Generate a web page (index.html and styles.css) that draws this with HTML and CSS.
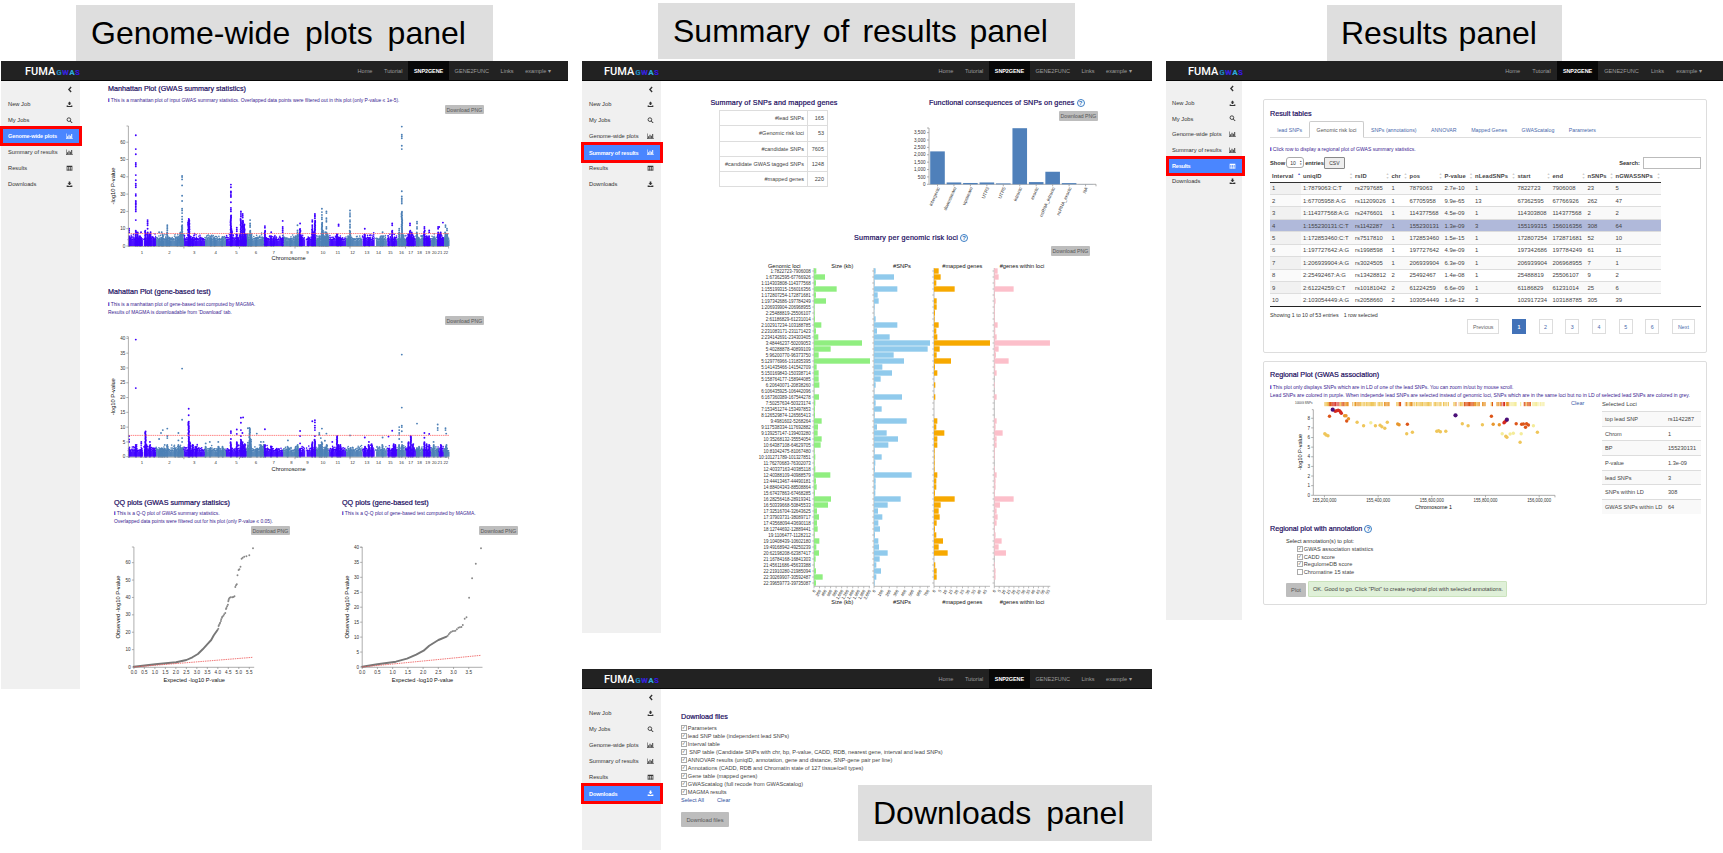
FILE: index.html
```html
<!DOCTYPE html>
<html lang="en">
<head>
<meta charset="utf-8">
<title>FUMA GWAS panels</title>
<link rel="stylesheet" href="styles.css">
</head>
<body>
<svg class="defs" width="0" height="0">
  <symbol id="i-upload" viewBox="0 0 16 16"><path d="M8 1l4.500 5H10v4H6V6H3.500zM1 11h3.500v1.500h7V11H15v4H1z"/></symbol>
  <symbol id="i-download" viewBox="0 0 16 16"><path d="M6 1h4v4.500h3L8 10.500 3 5.500h3zM1 11h3.500l3.500 2 3.500-2H15v4H1z"/></symbol>
  <symbol id="i-search" viewBox="0 0 16 16"><circle cx="6.500" cy="6.500" r="4.500" fill="none" stroke="currentColor" stroke-width="2.200"/><path d="M9 10.500L10.500 9l5 5-1.500 1.500z"/></symbol>
  <symbol id="i-chart" viewBox="0 0 18 16"><path d="M0 1h1.300v13H18v1.300H0zM3 8h2.400v5H3zM6.500 4h2.400v9H6.500zM10 6.500h2.400V13H10zM13.500 2.500h2.400V13h-2.400z"/></symbol>
  <symbol id="i-table" viewBox="0 0 16 16"><path fill-rule="evenodd" d="M1 2h14v12H1zM2.300 5v2h3V5zm4.300 0v2h3V5zM11 5v2h2.700V5zM2.300 8v2h3V8zm4.300 0v2h3V8zM11 8v2h2.700V8zM2.300 11v2h3v-2zm4.300 0v2h3v-2zm4.400 0v2h2.700v-2z"/></symbol>
  <symbol id="i-left" viewBox="0 0 16 16"><path d="M11 1.500L5 8l6 6.500" fill="none" stroke="currentColor" stroke-width="3.600"/></symbol>
</svg>

<div class="board">
  <div class="col col-a">
    <h1 class="title title-a">Genome-wide plots panel</h1>
    <section class="panel panel-a" data-active="2">
      <main class="plots">
        <div class="block manhattan">
          <h2>Manhattan Plot (GWAS summary statistics)</h2>
          <p class="info"><b>i</b> This is a manhattan plot of input GWAS summary statistics. Overlapped data points were filtered out in this plot (only P-value ≤ 1e-5).</p>
          <button class="png">Download PNG</button>
          <svg id="man1" width="390" height="150" viewBox="100 118 390 150"></svg>
        </div>
        <div class="block manhattan gene">
          <h2>Mahattan Plot (gene-based test)</h2>
          <p class="info"><b>i</b> This is a manhattan plot of gene-based test computed by MAGMA.</p>
          <p class="info">Results of MAGMA is downloadable from 'Download' tab.</p>
          <button class="png">Download PNG</button>
          <svg id="man2" width="390" height="146" viewBox="100 329 390 146"></svg>
        </div>
        <div class="qq-row">
          <div class="block qq">
            <h2>QQ plots (GWAS summary statisics)</h2>
            <p class="info"><b>i</b> This is a Q-Q plot of GWAS summary statistics.</p>
            <p class="info">Overlapped data points were filtered out for his plot (only P-value ≤ 0.05).</p>
            <button class="png">Download PNG</button>
            <svg id="qq1" width="160" height="148" viewBox="114 538 160 148"></svg>
          </div>
          <div class="block qq">
            <h2>QQ plots (gene-based test)</h2>
            <p class="info"><b>i</b> This is a Q-Q plot of gene-based test computed by MAGMA.</p>
            <p class="info">&nbsp;</p>
            <button class="png">Download PNG</button>
            <svg id="qq2" width="160" height="148" viewBox="342 538 160 148"></svg>
          </div>
        </div>
      </main>
    </section>
  </div>

  <div class="col col-b">
    <h1 class="title title-b">Summary of results panel</h1>
    <section class="panel panel-b" data-active="3">
      <main class="summary">
        <div class="sum-top">
          <div class="sum-left">
            <h2>Summary of SNPs and mapped genes</h2>
            <table class="counts">
              <tr><td>#lead SNPs</td><td>165</td></tr>
              <tr><td>#Genomic risk loci</td><td>53</td></tr>
              <tr><td>#candidate SNPs</td><td>7605</td></tr>
              <tr><td>#candidate GWAS tagged SNPs</td><td>1248</td></tr>
              <tr><td>#mapped genes</td><td>220</td></tr>
            </table>
          </div>
          <div class="sum-right">
            <h2>Functional consequences of SNPs on genes <i class="help">?</i></h2>
            <button class="png">Download PNG</button>
            <svg id="bars" width="200" height="100" viewBox="905 121 200 100"></svg>
          </div>
        </div>
        <h2 class="loci-title">Summary per genomic risk loci <i class="help">?</i></h2>
        <button class="png loci-png">Download PNG</button>
        <svg id="loci" width="330" height="350" viewBox="750 258 330 350"></svg>
      </main>
    </section>

    <section class="panel panel-d" data-active="5">
      <main class="downloads">
        <h2>Download files</h2>
        <ul class="checks">
          <li class="on">Parameters</li>
          <li class="on">lead SNP table (independent lead SNPs)</li>
          <li class="on">Interval table</li>
          <li class="on">&nbsp;SNP table (Candidate SNPs with chr, bp, P-value, CADD, RDB, nearest gene, interval and lead SNPs)</li>
          <li class="on">ANNOVAR results (uniqID, annotation, gene and distance, SNP-gene pair per line)</li>
          <li class="on">Annotations (CADD, RDB and Chromatin state of 127 tissue/cell types)</li>
          <li class="on">Gene table (mapped genes)</li>
          <li class="on">GWAScatalog (full recode from GWAScatalog)</li>
          <li class="on">MAGMA results</li>
        </ul>
        <p class="links"><a>Select All</a><a>Clear</a></p>
        <button class="big">Download files</button>
      </main>
      <h1 class="title title-d">Downloads panel</h1>
    </section>
  </div>

  <div class="col col-c">
    <h1 class="title title-c">Results panel</h1>
    <section class="panel panel-c" data-active="4">
      <main class="results">
        <div class="card card-tables">
          <h2>Result tables</h2>
          <nav class="tabs"><a>lead SNPs</a><a class="on">Genomic risk loci</a><a>SNPs (annotations)</a><a>ANNOVAR</a><a>Mapped Genes</a><a>GWAScatalog</a><a>Parameters</a></nav>
          <p class="info"><b>i</b> Click row to display a regional plot of GWAS summary statistics.</p>
          <div class="tools"><span>Show</span><span class="select">10 <small>▴<br>▾</small></span><span>entries</span><button class="csv">CSV</button><span class="search">Search:</span><span class="input"></span></div>
          <table class="grid" id="grid"></table>
          <p class="showing">Showing 1 to 10 of 53 entries<span>1 row selected</span></p>
          <div class="pages"><a class="prev">Previous</a><a class="on">1</a><a>2</a><a>3</a><a>4</a><a>5</a><a>6</a><a class="next">Next</a></div>
        </div>
        <div class="card card-plot">
          <h2>Regional Plot (GWAS association)</h2>
          <p class="info"><b>i</b> This plot only displays SNPs which are in LD of one of the lead SNPs. You can zoom in/out by mouse scroll.</p>
          <p class="info wide">Lead SNPs are colored in purple. When independe lead SNPs are selected instead of genomic loci, SNPs which are in the same loci but no in LD of selected lead SNPs are colored in grey.</p>
          <div class="regional">
            <svg id="region" width="301" height="114" viewBox="1270 399 301 114"></svg>
            <a class="clear">Clear</a>
            <div class="selected">
              <p>Selected Loci</p>
              <table>
                <tr><td>top lead SNP</td><td>rs1142287</td></tr>
                <tr><td>Chrom</td><td>1</td></tr>
                <tr><td>BP</td><td>155230131</td></tr>
                <tr><td>P-value</td><td>1.3e-09</td></tr>
                <tr><td>lead SNPs</td><td>3</td></tr>
                <tr><td>SNPs within LD</td><td>308</td></tr>
                <tr><td>GWAS SNPs within LD</td><td>64</td></tr>
              </table>
            </div>
          </div>
          <h2 class="anno">Regional plot with annotation <i class="help">?</i></h2>
          <p class="pick">Select annotation(s) to plot:</p>
          <ul class="checks">
            <li class="on">GWAS association statistics</li>
            <li class="on">CADD score</li>
            <li class="on">RegulomeDB score</li>
            <li>Chromatine 15 state</li>
          </ul>
          <div class="go"><button class="big">Plot</button><span class="alert">OK. Good to go. Click "Plot" to create regional plot with selected annotations.</span></div>
        </div>
      </main>
    </section>
  </div>
</div>
<script src="app.js"></script>
</body>
</html>
```
FILE: styles.css
```css
* { box-sizing: border-box; }
body { margin: 0; width: 1723px; height: 853px; overflow: hidden; background: #fff; color: #333; font: 5.6px "Liberation Sans", Arial, sans-serif; }
h1, h2, p, ul { margin: 0; padding: 0; font-weight: normal; }
svg { display: block; }
.defs { position: absolute; }
button { font-family: inherit; border: 0; padding: 0; display: block; color: #555; background: #bdbdbd; border-radius: 1px; white-space: nowrap; }
.board { display: flex; height: 853px; }
.col-a { width: 581px; padding: 5px 0 0 1px; }
.col-b { width: 585px; padding: 3px 0 0 1px; }
.col-c { width: 557px; padding-top: 5px; }

.title { height: 56px; line-height: 56px; font-size: 32px; color: #000; background: #dedede; white-space: nowrap; }
.title-a { width: 417px; margin-left: 75px; padding-left: 15px; word-spacing: 6px; }
.title-b { width: 417px; margin: 0 0 2px 76px; padding-left: 15px; word-spacing: 4px; }
.title-c { width: 235px; margin-left: 161px; padding-left: 14px; word-spacing: 2px; }
.title-d { position: absolute; left: 276px; top: 116px; width: 294px; padding-left: 15px; word-spacing: 6px; }

.panel { position: relative; display: grid; grid-template: 20px 1fr / 79px 1fr; }
.panel-a { width: 567px; height: 628px; }
.panel-b { width: 570px; height: 572px; }
.panel-d { width: 570px; height: 181px; margin-top: 36px; }
.panel-c { width: 557px; height: 559px; grid-template-columns: 76px 1fr; }
.topbar { grid-column: 1 / 3; display: flex; align-items: center; background: #222; border-bottom: 1px solid #080808; padding: 0 11.4px 0 24px; color: #9d9d9d; font-size: 5.6px; }
.panel-b .topbar, .panel-d .topbar { padding-right: 14.5px; padding-left: 22px; }
.panel-c .topbar { padding-right: 15px; padding-left: 22px; }
.logo { color: #fff; font: 500 11px/19px Roboto, sans-serif; margin-right: auto; display: flex; align-items: baseline; padding-top: 3px; }
.logo small { font-size: 8px; letter-spacing: .3px; font-weight: 900; margin-left: 1px; }
.logo .g { color: #1f86b8; } .logo .w { color: #3522d6; } .logo .a { color: #2ea9dc; } .logo .s { color: #3516dc; }
.topbar a { line-height: 20px; height: 19px; padding: 0 5.75px; }
.topbar a.on { color: #fff; background: #080808; font-weight: bold; font-size: 5.5px; letter-spacing: -.1px; }
.panel-c .topbar a { padding: 0 6.1px; }
.side { background: #f0f0f0; color: #333; padding-top: 2px; }
.side .fold { display: flex; justify-content: flex-end; height: 13px; padding: 2px 7px 0 0; }
.side .fold svg { width: 6px; height: 7px; }
.side a { display: flex; align-items: center; justify-content: space-between; height: 14px; margin-bottom: 2px; padding: 0 7px; font-size: 5.75px; }
.side a svg { width: 7px; height: 6.5px; fill: currentColor; }
.side a.on { height: 20px; margin: -3px -2px -1px -1px; padding: 0 6px 0 5px; border: 3px solid #f00; background: #4a86ff; color: #fff; font-weight: bold; font-size: 5.6px; letter-spacing: -.15px; position: relative; }
.panel-a .side, .panel-b .side { padding-top: 3px; }
.panel-d .side { padding-top: 3px; }
.panel-d .side .fold { height: 14px; }
.panel-b .side a.on, .panel-d .side a.on { height: 21px; margin-bottom: -2px; }
.panel-c .side a { margin-bottom: 1.7px; padding: 0 6px; }
.panel-c .side a.on { margin: -3px -3px -1.3px 0; padding: 0 6px 0 3px; letter-spacing: -.25px; }

h2 { font-size: 7.2px; line-height: 10px; color: #190a5c; -webkit-text-stroke: .2px #190a5c; white-space: nowrap; }
.info { color: #3a2391; font-size: 5.05px; line-height: 8px; height: 8px; white-space: nowrap; }
.info b { color: #1d00b8; -webkit-text-stroke: .2px #1d00b8; }
.plots .info { font-size: 4.92px; }
.png { width: 39px; height: 9.5px; font-size: 5.2px; line-height: 10px; }
.help { display: inline-block; width: 8px; height: 8px; border: 1px solid #3b7dc4; border-radius: 50%; color: #2a6bb5; font: bold 6px/6.5px "Liberation Sans", sans-serif; text-align: center; vertical-align: middle; -webkit-text-stroke: 0; }

/* genome-wide plots */
.plots { padding: 3px 0 0 20px; }
.manhattan { height: 203px; }
.manhattan h2, .manhattan .info { margin-left: 8px; }
.manhattan h2 { margin-bottom: 3px; }
.manhattan .png { margin: -.5px 0 4px 345px; }
.gene .png { margin: -1px 0 4px 345px; }
.gene .info { line-height: 9px; height: 8.3px; }
.qq-row { display: flex; padding: 7.5px 0 0 14px; gap: 68px; }
.qq { width: 160px; }
.qq h2 { margin-bottom: 2.5px; }
.qq .png { margin: -.5px 0 2.5px 137px; }

/* summary */
.summary { padding: 17px 0 0 0; }
.sum-top { display: flex; height: 135px; }
.sum-left { width: 244px; padding-left: 58px; }
.sum-left h2 { width: 110px; display: flex; justify-content: center; margin-bottom: 2px; letter-spacing: .14px; }
.counts { border-collapse: collapse; font-size: 5.5px; width: 109px; color: #444; }
.counts td { border: 1px solid #ddd; height: 15.3px; padding: 0 3px; text-align: right; white-space: nowrap; }
.counts td:last-child { width: 20px; }
.sum-right h2 { margin: 0 0 3px 24px; letter-spacing: .1px; }
.sum-right .png { margin-left: 154px; }
.loci-title { margin-left: 193px; height: 12px; letter-spacing: .2px; }
.loci-png { margin: 1px 0 2.5px 390px; }
#loci { margin-left: 89px; }

/* downloads */
.downloads { padding: 23px 0 0 20px; color: #444; }
.downloads h2 { margin-bottom: 2px; }
.checks { list-style: none; color: #444; }
.checks li { display: flex; align-items: center; gap: .8px; height: 8.05px; font-size: 5.6px; white-space: nowrap; }
.checks li::before { content: ""; width: 4px; height: 4px; border: .5px solid #aaa; font: bold 4.5px/3.5px "DejaVu Sans", sans-serif; color: #111; display: block; }
.checks li.on::before { content: "✓"; }
.links { color: #2f4fa0; height: 8px; line-height: 9px; display: flex; gap: 13px; }
.big { height: 15px; width: 48px; font-size: 5.7px; }
.downloads .big { margin-top: 8px; }

/* results */
.results { padding: 18px 16px 0 21px; }
.card { border: 1px solid #ddd; border-radius: 2px; padding-left: 6px; padding-right: 5px; }
.card-tables { height: 254px; padding-top: 9px; margin-bottom: 8px; }
.card-plot { height: 243.5px; padding-top: 8px; }
.tabs { display: flex; height: 17px; margin-top: 2px; border-bottom: 1px solid #ddd; color: #4767ab; font-size: 5.25px; line-height: 18px; }
.tabs a { padding: 0 6.25px; border: 1px solid transparent; height: 17px; line-height: 16px; white-space: nowrap; }
.tabs a.on { border-color: #ccc; border-bottom-color: #fff; border-radius: 2px 2px 0 0; background: #fff; color: #555; }
.card-tables .info { margin-top: 7px; }
.tools { display: flex; align-items: center; height: 13px; margin-top: 3px; font-size: 5.7px; font-weight: bold; }
.select { display: flex; align-items: center; justify-content: space-between; width: 18px; height: 11px; border: 1px solid #aaa; border-radius: 3px; margin: 0 1px; padding: 0 1.5px 0 3px; font-weight: normal; font-size: 5px; }
.select small { font-size: 3px; line-height: 3px; }
.csv { width: 21px; height: 12px; background: #eee; border: 1px solid #888; font-size: 5px; color: #333; }
.search { margin-left: auto; margin-right: 3px; }
.input { width: 58px; height: 12px; border: 1px solid #bbb; }
.grid { border-collapse: collapse; table-layout: fixed; width: 390.5px; font-size: 5.9px; color: #444; margin-top: 1px; }
.grid th { height: 12px; text-align: left; padding: 0 0 0 2px; white-space: nowrap; border-bottom: 1px solid #333; font-size: 5.8px; letter-spacing: .1px; position: relative; }
.grid th i { position: absolute; right: 1px; top: 2px; font: 4px/4px "DejaVu Sans"; color: #ccc; }
.grid th:first-child i { color: #45c; }
.grid td { height: 12.44px; padding: 0 0 0 2px; white-space: nowrap; border-top: 1px solid #ddd; }
.grid tr:nth-child(even) td { background: #f9f9f9; }
.grid tr td:first-child { background: #fafafa; }
.grid tr:nth-child(even) td:first-child { background: #f1f1f1; }
.grid tr.sel td, .grid tr.sel td:first-child { background: #b0b9da; }
.showing { border-top: 1px solid #222; line-height: 16px; height: 13px; font-size: 5.3px; }
.showing span { margin-left: 5px; }
.pages { display: flex; justify-content: flex-end; gap: 12.7px; padding-right: 6px; color: #4767ab; font-size: 5.3px; }
.pages a { width: 14px; height: 15px; line-height: 14px; border: 1px solid #ddd; text-align: center; }
.pages .prev { width: 32px; color: #666; } .pages .next { width: 23px; }
.pages a.on { background: #4272b8; border-color: #4272b8; color: #fff; font-weight: bold; }
.card-plot h2 { margin-bottom: 3px; }
.regional { display: flex; height: 125px; }
.clear { width: 31px; color: #3c5aa8; line-height: 8px; }
.selected { width: 99px; color: #444; }
.selected p { line-height: 11px; height: 12px; font-size: 5.8px; }
.selected table { border-collapse: collapse; width: 99px; font-size: 5.6px; }
.selected td { height: 14.7px; padding: 0 3px; border-top: 1px solid #ddd; white-space: nowrap; }
.selected td:last-child { padding-left: 0; width: 33px; }
.selected tr:nth-child(odd) { background: #f9f9f9; }
.card-plot h2.anno { margin-bottom: 2px; }
.pick { margin-left: 16px; line-height: 10px; height: 9px; }
.card-plot .checks { margin-left: 27px; }
.card-plot .checks li { height: 7.8px; }
.go { display: flex; align-items: flex-end; gap: 2px; margin: 5px 0 0 16px; }
.go .big { width: 20px; height: 14px; }
.alert { width: 199px; height: 16px; line-height: 15px; padding-left: 4px; background: #dff0d8; border: 1px solid #cbe3bd; border-radius: 1px; font-size: 5.58px; color: #444; white-space: nowrap; }
svg text { font-family: "Liberation Sans", Arial, sans-serif; }
```
FILE: app.js
```js
const MENU = [['New Job', 'upload'], ['My Jobs', 'search'], ['Genome-wide plots', 'chart'], ['Summary of results', 'chart'], ['Results', 'table'], ['Downloads', 'download']];

document.querySelectorAll('.panel').forEach(panel => {
  const active = +panel.dataset.active;
  const items = MENU.map(([name, icon], i) =>
    `<a class="${i === active ? 'on' : ''}"><span>${name}</span><svg><use href="#i-${icon}"/></svg></a>`).join('');
  panel.insertAdjacentHTML('afterbegin',
    `<header class="topbar"><div class="logo">FUMA<small><span class="g">G</span><span class="w">W</span><span class="a">A</span><span class="s">S</span></small></div>
     <a>Home</a><a>Tutorial</a><a class="on">SNP2GENE</a><a>GENE2FUNC</a><a>Links</a><a>example ▾</a></header>
     <aside class="side"><div class="fold"><svg><use href="#i-left"/></svg></div>${items}</aside>`);
});

const $ = id => document.getElementById(id);
let seed = 7;
const rnd = () => (seed = (seed * 16807) % 2147483647) / 2147483647;

const text = (x, y, s, o = {}) => {
  const size = o.size || 4.6;
  const len = o.len ? ` textLength="${o.len}" lengthAdjust="spacingAndGlyphs"` : '';
  const rot = o.rot ? ` transform="rotate(${o.rot} ${x} ${y})"` : '';
  return `<text x="${x}" y="${y}" dy="${size * 0.36}" font-size="${size}" text-anchor="${o.anchor || 'middle'}" fill="${o.fill || '#333'}"${len}${rot}>${s}</text>`;
};
const line = (x1, y1, x2, y2, c = '#999', extra = '') =>
  `<line x1="${x1}" y1="${y1}" x2="${x2}" y2="${y2}" stroke="${c}" stroke-width=".8" ${extra}/>`;
const dot = (x, y, c, r = 0.95) => `<circle cx="${x.toFixed(1)}" cy="${y.toFixed(1)}" r="${r}" fill="${c}"/>`;

/* Manhattan plots */
const BOUNDS = [347, 421, 497, 553, 611, 666, 716, 765, 808, 852, 890, 934, 978, 1012, 1045, 1072, 1097, 1123, 1145, 1164, 1184, 1199, 1213];
const LABELS = [142, 169.4, 194.2, 215.7, 236.4, 256, 273.8, 291.5, 307.4, 323, 337.8, 352.6, 367, 378.5, 390.3, 401.4, 410.7, 419.5, 427.7, 434.3, 439.9, 445.8];
const px = g => 128.4 + (g - 347) * 0.37;
const chromColor = g => {
  let i = BOUNDS.findIndex(b => g < b) - 1;
  if (i < 0) i = 21;
  return i % 2 ? '#4d80b6' : '#3f00ff';
};

function manhattan(id, o) {
  const py = v => o.zero - v * o.unit;
  let s = '';
  for (let g = 347; g < 1213; g += 1.5) {
    if ((g > 385 && g < 389) || (g > 823 && g < 828) || (g > 977 && g < 980) || (g > 1011 && g < 1015) || (g > 1043 && g < 1047)) continue;
    const h = o.base + rnd() * rnd() * o.jitter;
    s += `<rect x="${px(g).toFixed(2)}" y="${py(h * 0.85).toFixed(1)}" width=".9" height="${(h * 0.85 * o.unit).toFixed(1)}" fill="${chromColor(g)}"/>`;
    s += dot(px(g), py(h), chromColor(g), 0.8);
    if (rnd() < 0.2) s += dot(px(g), py(h + rnd() * o.base * 0.35), chromColor(g), 0.8);
  }
  for (const [g, top, ...vals] of o.peaks) {
    for (let v = 0; v <= top; v += 0.9 / o.unit) s += dot(px(g + (rnd() - 0.5) * 2), py(v), chromColor(g));
    vals.forEach(v => { s += dot(px(g), py(v), chromColor(g)); });
  }
  s += line(128.4, py(7.2), 449, py(7.2), '#f66', 'stroke-dasharray="1.500 .7"');
  s += line(128.4, o.top, 128.4, o.zero + 1) + line(128.4, o.zero + .5, 449, o.zero + .5) + line(126.5, o.top, 128.4, o.top);
  [183.9, 239.5, 295, 350, 405.5, 448.6].forEach(x => { s += line(x, o.zero, x, o.zero + 2.5); });
  for (let v = 0; v <= o.max; v += o.step) s += line(126.3, py(v), 128.4, py(v)) + text(125.3, py(v), v, { anchor: 'end' });
  LABELS.forEach((x, i) => { s += text(x, o.zero + 6.2, i + 1, { size: 4.3 }); });
  s += text(288.6, o.zero + 12, 'Chromosome', { size: 5.6, len: 34, fill: '#111' });
  s += text(113, (o.top + o.zero) / 2, '-log10 P-value', { size: 5.6, rot: -90, len: 37, fill: '#111' });
  $(id).innerHTML = s;
}

manhattan('man1', {
  zero: 246, unit: 1.73, top: 126, max: 60, step: 10, base: 3.6, jitter: 3.5,
  peaks: [
    [349, 6, 10, 9, 8], [367, 9, 64, 56, 53, 48, 47, 46, 41, 38, 36, 35, 34, 30, 29, 26, 25.4, 24.6, 24, 23, 22, 21, 20, 15], [372, 8], [378, 6], [381, 4, 8], [393, 9], [399, 8, 15, 14, 13, 12, 10], [403, 7], [407, 7, 8], [416, 5],
    [430, 4, 8], [437, 5, 8], [440, 7], [452, 8, 12, 11, 10, 9], [458, 5], [480, 5], [487, 8], [492, 12, 40.5, 39.8, 38.5, 35, 29, 26, 21.5, 20.5, 19, 17, 15.5, 14], [494, 7],
    [509, 15], [511, 16], [514, 6], [521, 5], [570, 5], [580, 4.5], [601, 5.5], [624, 18, 35.5, 34, 31.5, 31, 30, 29, 28.3, 25.3, 22, 21, 20], [626, 10], [640, 7, 10.5, 9.5, 8.5], [644, 5], [651, 16, 20, 19, 18, 17], [656, 15, 18.5, 17.5, 16.5], [660, 13], [664, 7],
    [670, 7], [676, 9, 15, 13, 12, 11], [679, 7], [692, 5], [716, 9, 11.5, 10.5], [720, 5], [733, 6, 8], [740, 5], [764, 5, 14.5, 11, 10, 9, 8], [785, 4.5], [799, 6], [804, 7, 12, 9, 8], [811, 10, 13], [815, 6],
    [834, 5], [844, 10, 15, 14, 12, 11], [847, 8], [851, 15, 18.5, 17.7, 17, 16], [863, 6], [870, 14, 21.5, 19.6, 18, 16.5, 15.5], [873, 9], [879, 6, 8], [882, 8, 20, 19, 16, 15, 14, 11, 10], [886, 7],
    [911, 7], [915, 5, 12.4, 11.6], [920, 5], [941, 6], [946, 9, 20.5, 19, 18, 17, 15, 14, 12.5, 11.5, 10.5], [986, 7, 10], [997, 5], [1029, 6], [1034, 6, 8], [1050, 5], [1060, 9, 13, 12], [1066, 5], [1079, 8, 10, 9],
    [1086, 20, 69, 64.4, 63.4, 62.3, 58, 56, 31.6, 28.6, 27.5, 26.6, 25.5, 24.5], [1089, 7], [1095, 4, 6], [1104, 7], [1108, 9, 13, 12], [1112, 8], [1117, 6], [1127, 8, 14, 13, 11, 10], [1131, 5], [1147, 9, 11, 10], [1154, 6], [1160, 6, 9, 8], [1172, 5], [1184, 8, 11, 10], [1187, 7, 11], [1191, 8], [1197, 5, 13.5], [1204, 8, 12, 11], [1208, 7, 10, 9]
  ]
});

manhattan('man2', {
  zero: 456.7, unit: 2.958, top: 336.7, max: 40, step: 5, base: 1.9, jitter: 2.2,
  peaks: [
    [349, 3, 7, 5.8, 5], [367, 4, 39.6, 23.2], [382, 3, 5, 4.5], [393, 8.7], [396, 4], [405, 4, 5], [416, 3], [430, 2, 6], [435, 3, 8], [440, 3, 9], [445, 3, 4], [452, 4, 9.5, 7, 6.3], [473, 3], [482, 4, 8, 5.5], [487, 3.5], [492, 3, 29.8, 12.5, 6.3, 5],
    [510, 12, 16.2, 14], [513, 5], [520, 4], [530, 3.5], [556, 3.5, 4.5], [567, 3, 5], [590, 3.5, 5], [602, 3.5], [624, 5, 8.6, 8, 6], [640, 5, 9.2, 7.7], [651, 6, 13.2, 11.5, 9, 7], [655, 5, 8], [657, 4, 13.3], [662, 4.5],
    [670, 4, 9.6, 4.7], [675, 9.9], [678, 6], [694, 3, 7.8], [705, 4, 5], [712, 4, 5], [716, 4, 9.3], [733, 3.5], [749, 3], [778, 3.4, 5.5], [799, 3.5], [804, 4], [811, 3, 8.7, 7, 4.5], [844, 5, 12], [851, 6, 12.3, 11.6, 10.5, 9.8, 9, 7],
    [863, 4, 8, 7.4], [867, 4, 6.3], [870, 5, 9.5], [878, 3, 5.4], [882, 4, 7.8], [898, 3, 5], [911, 7], [915, 4], [920, 4], [946, 3, 7.2], [986, 3.5, 6.5], [997, 4, 5], [1005, 4.5], [1034, 4, 6.5], [1050, 3, 6.8], [1060, 3, 8.8], [1064, 4.5], [1068, 4],
    [1079, 4, 10, 9, 8, 7.3, 6], [1086, 4, 34.5, 16.6, 10.5, 10, 8.6, 5], [1104, 5], [1110, 7], [1116, 4.5], [1127, 3, 11.2], [1132, 3.5], [1147, 5, 8, 6.4], [1153, 4.5], [1160, 4, 7.7], [1172, 4, 5], [1183, 3, 10.9, 9.7, 9], [1192, 4], [1204, 3, 9.6, 9], [1206, 4, 7.8]
  ]
});

/* QQ plots */
function qq(id, o) {
  const X = v => o.x0 + v * o.ux, Y = v => 667 - v * o.uy;
  let s = line(o.x0, 547, o.x0, 667.3) + line(o.x0, 667.3, o.x0 + 120.3, 667.3) + line(o.x0 - 2, 547, o.x0, 547);
  for (let v = 0; v <= o.ymax; v += o.ystep) s += line(o.x0 - 2, Y(v), o.x0, Y(v)) + text(o.x0 - 3.2, Y(v), v, { anchor: 'end' });
  for (let v = 0; v <= o.xmax; v += 0.5) s += line(X(v), 667, X(v), 669) + text(X(v), 672.7, v.toFixed(1), { size: 4.6 });
  const P = o.curve.map(([a, b]) => [o.x0 + (a - o.ox) * 0.37, 480 + b / 3]);
  s += `<polyline points="${P.map(p => p.map(n => n.toFixed(1)).join()).join(' ')}" fill="none" stroke="#777" stroke-width="1.900" stroke-linecap="round" stroke-linejoin="round"/>`;
  o.dots.forEach(([a, b]) => { s += dot(o.x0 + (a - o.ox) * 0.37, 480 + b / 3, '#888', 0.95); });
  s += line(o.x0, 667, o.x0 + 119, o.red, '#e55', 'stroke-dasharray="1.500 .8"');
  s += text(o.x0 + 60.3, 679.5, 'Expected -log10 P-value', { size: 5.6, len: 61.4, fill: '#111' });
  s += text(o.x0 - 15.5, 607, 'Observed -log10 P-value', { size: 5.6, len: 63, rot: -90, fill: '#111' });
  $(id).innerHTML = s;
}
qq('qq1', {
  x0: 133.9, ox: 362, ux: 20.98, uy: 1.739, ymax: 60, ystep: 10, xmax: 5.5, red: 657.3,
  curve: [[362, 560], [420, 553], [476, 547], [504, 540], [520, 532], [535, 522], [548, 508], [560, 493], [571, 480], [578, 466], [588, 450]],
  dots: [[590, 446], [591, 438], [592, 435], [594, 431], [595, 428], [597, 423], [598, 418], [600, 413], [601, 410], [604, 407], [606, 403], [609, 399], [611, 387], [612, 384], [614, 379], [616, 374], [617, 364], [618, 360], [619, 356], [621, 353], [624, 352], [628, 352], [631, 351], [634, 349], [636, 321], [638, 316], [640, 313], [642, 286], [645, 270], [647, 268], [650, 260], [653, 236], [656, 233], [660, 230], [666, 229], [674, 226], [684, 205]]
});
qq('qq2', {
  x0: 362.2, ox: 979, ux: 30.45, uy: 2.99, ymax: 40, ystep: 5, xmax: 3.5, red: 655.3,
  curve: [[979, 560], [1020, 553], [1070, 545], [1100, 536], [1125, 524], [1145, 512], [1160, 497], [1185, 480], [1207, 470]],
  dots: [[1210, 467], [1213, 463], [1216, 459], [1219, 456], [1223, 454], [1227, 453], [1231, 452], [1235, 448], [1239, 443], [1243, 442], [1247, 441], [1251, 435], [1256, 416], [1261, 412], [1268, 353], [1276, 295], [1286, 251], [1300, 205]]
});

/* Functional consequences */
{
  const names = ['intergenic', 'downstream', 'upstream', 'UTR3', 'UTR5', 'intronic', 'exonic', 'ncRNA_intronic', 'ncRNA_exonic', 'NA'];
  const vals = [2230, 125, 90, 125, 60, 3800, 150, 850, 80, 8];
  const k = 155 / 3 / 3500, y0 = 184.3;
  let s = line(929, 128, 929, y0) + line(929, y0, 1096, y0) + line(927, 128, 929, 128) + line(1096, y0, 1096, y0 + 2);
  vals.forEach((v, i) => {
    const x = 937.5 + i * 16.45;
    s += `<rect x="${x - 7.3}" y="${y0 - v * k}" width="14.600" height="${v * k}" fill="#4f80ba"/>` + line(x, y0, x, y0 + 2);
    s += text(x + 1, y0 + 3, names[i], { size: 4.6, rot: -66, anchor: 'end' });
  });
  for (let v = 0; v <= 3500; v += 500) s += line(927, y0 - v * k, 929, y0 - v * k) + text(925.5, y0 - v * k, v.toLocaleString('en-US'), { anchor: 'end' });
  $('bars').innerHTML = s;
}

/* Per-locus summary */
{
  const loci = '1:7822723-7906008 1:67362595-67766926 1:114303808-114377568 1:155199315-156016356 1:172807254-172871681 1:197342686-197784249 1:206939904-206968955 2:25488819-25506107 2:61186829-61231014 2:102917234-103188785 2:231083171-231171423 2:234142691-234303405 3:48446237-50209053 5:40288878-40899109 5:96200770-96373750 5:129776966-131835395 5:141435466-141542709 5:150169843-150338714 5:158764177-158944085 6:20640071-20838260 6:106435925-106442096 6:167360389-167544278 7:50257634-50323174 7:153451274-153497853 8:126529874-126565413 9:4981602-5268264 9:117538334-117692882 9:139257147-139403280 10:35268132-35554054 10:64387108-64629705 10:81042475-81067480 10:101271789-101327851 11:76270683-76302073 12:40337163-40385118 12:40388109-40988579 13:44413467-44490181 14:88404343-88508864 15:67437863-67468285 16:28256418-28919341 16:50339668-50845533 17:32516704-32643625 17:37903731-38089717 17:43568094-43690118 18:12744692-12889441 19:1106477-1128212 19:10408439-10602180 19:49168942-49250239 20:62198208-62387417 21:16784168-16841303 21:45611686-45633388 22:21910280-21985094 22:30269907-30592487 22:39659773-39735087'.split(' ');
  const series = [
    { x: 814, mid: 842.3, name: 'Size (kb)', len: 22, c: '#90ee80', step: 200, n: 10, gap: 5.53, v: [7,33,6,68,6,36,2,2,3,22,6,13,144,50,14,168,8,14,14,16,1,15,4,3,3,23,12,11,23,20,2,4,2,4,49,6,8,3,51,42,9,15,9,11,2,16,7,15,5,2,6,26,6] },
    { x: 874, mid: 902, name: '#SNPs', len: 18, c: '#90caec', step: 100, n: 7, gap: 7.67, v: [5,60,2,70,11,14,2,1,5,70,9,47,168,161,59,90,25,54,20,5,1,84,5,23,2,98,9,38,72,43,2,23,4,3,113,5,5,4,80,41,12,25,13,18,3,13,15,41,17,7,21,7,2] },
    { x: 934, mid: 962.3, name: '#mapped genes', len: 40, c: '#f7a900', step: 5, n: 9, gap: 5.7, v: [14,20,7,62,0,8,8,3,2,14,7,10,168,17,8,51,3,10,0,4,0,4,0,0,0,10,7,31,10,10,2,2,2,2,10,7,7,3,62,20,14,17,8,3,7,27,14,41,0,4,8,8,0] },
    { x: 994.3, mid: 1022, name: '#genes within loci', len: 44.7, c: '#fcbfca', step: 5, n: 11, gap: 4.9, v: [10,13,3,58,2,4,2,2,2,10,3,7,167,13,5,43,3,7,0,2,0,7,0,0,0,7,4,25,7,7,2,2,0,2,7,4,4,2,58,17,7,10,7,2,4,22,13,35,0,2,4,4,0] }
  ];
  let s = text(784.3, 265.7, 'Genomic loci', { size: 5.4, len: 32.7, fill: '#111' });
  loci.forEach((l, i) => { s += text(810.7, 271 + i * 6, l, { size: 4.5, anchor: 'end', len: l.length * 2.36 }); });
  series.forEach(q => {
    s += text(q.mid, 265.7, q.name, { size: 5.4, len: q.len, fill: '#111' }) + text(q.mid, 602.3, q.name, { size: 5.4, len: q.len, fill: '#111' });
    s += line(q.x, 268, q.x, 586.3, '#aaa') + line(q.x, 586.3, q.x + 56, 586.3, '#aaa');
    q.v.forEach((w, i) => {
      const y = 271 + i * 6;
      s += line(q.x - 1.8, y, q.x, y, '#aaa');
      if (w) s += `<rect x="${q.x}" y="${y - 2.7}" width="${w / 3}" height="5.400" fill="${q.c}"/>`;
    });
    for (let i = 0; i <= q.n; i++) {
      const x = q.x + i * q.gap;
      s += line(x, 586.3, x, 588.3, '#aaa') + text(x + .6, 590, (i * q.step).toLocaleString('en-US'), { size: 4.2, rot: -60, anchor: 'end' });
    }
  });
  $('loci').innerHTML = s;
}

/* Result table */
{
  const head = ['Interval', 'uniqID', 'rsID', 'chr', 'pos', 'P-value', 'nLeadSNPs', 'start', 'end', 'nSNPs', 'nGWASSNPs'];
  const widths = [31, 52, 36.5, 18, 35, 30.5, 42.5, 35, 35, 28, 47];
  const rows = `1 1:7879063:C:T rs2797685 1 7879063 2.7e-10 1 7822723 7906008 23 5
2 1:67705958:A:G rs11209026 1 67705958 9.9e-65 13 67362595 67766926 262 47
3 1:114377568:A:G rs2476601 1 114377568 4.5e-09 1 114303808 114377568 2 2
4 1:155230131:C:T rs1142287 1 155230131 1.3e-09 3 155199315 156016356 308 64
5 1:172853460:C:T rs7517810 1 172853460 1.5e-15 1 172807254 172871681 52 10
6 1:197727642:A:G rs1998598 1 197727642 4.9e-09 1 197342686 197784249 61 11
7 1:206939904:A:G rs3024505 1 206939904 6.3e-09 1 206939904 206968955 7 1
8 2:25492467:A:G rs13428812 2 25492467 1.4e-08 1 25488819 25506107 9 2
9 2:61224259:C:T rs10181042 2 61224259 6.6e-09 1 61186829 61231014 25 6
10 2:103054449:A:G rs2058660 2 103054449 1.6e-12 3 102917234 103188785 305 39`.split('\n');
  $('grid').innerHTML = '<colgroup>' + widths.map(w => `<col style="width:${w}px">`).join('') + '</colgroup><tr>' +
    head.map((h, i) => `<th>${h}<i>${i ? '▴<br>▾' : '▴'}</i></th>`).join('') + '</tr>' +
    rows.map((r, i) => `<tr class="${i === 3 ? 'sel' : ''}">` + r.split(' ').map(c => `<td>${c}</td>`).join('') + '</tr>').join('');
}

/* Regional plot */
{
  const X = a => 1160 + a / 2.785, Y = b => 355 + b / 3;
  const R = '#d62a1e', D = '#dd5518', O = '#e8962c', Y1 = '#efc65a', Y2 = '#f4ec9a';
  const groups = [
    [R, [[488, 169], [492, 167], [496, 166], [500, 167], [503, 171], [505, 175], [960, 201], [964, 197], [958, 203]]],
    [D, [[472, 184], [520, 198], [689, 208], [923, 184], [992, 206], [1007, 208], [1012, 207], [1018, 217], [1021, 206], [1026, 210]]],
    [O, [[514, 182], [518, 182], [525, 191], [662, 207], [666, 209], [928, 208], [945, 209]]],
    [Y1, [[459, 236], [463, 240], [468, 242], [549, 202], [567, 212], [600, 212], [613, 211], [618, 215], [626, 220], [633, 202], [687, 236], [703, 232], [771, 229], [776, 227], [781, 230], [796, 229], [842, 206], [858, 212], [898, 209], [963, 244], [966, 247], [1003, 262], [1051, 232]]],
    [Y2, [[587, 203], [953, 236], [975, 237], [984, 235], [1006, 236], [1040, 212]]]
  ];
  let s = '';
  const rug = [[458, 470, Y1], [470, 480, D], [480, 490, R], [490, 502, R], [502, 514, D], [514, 526, O], [536, 555, O], [557, 588, Y1], [590, 602, Y1], [606, 621, Y1], [624, 640, O], [658, 663, Y1], [665, 671, D], [682, 705, O], [706, 724, Y1], [726, 754, Y1], [762, 784, Y1], [788, 803, Y1], [817, 824, D], [832, 846, O], [847, 872, D], [874, 888, O], [897, 905, O], [921, 927, D], [937, 950, O], [951, 961, R], [963, 970, O], [975, 993, Y2], [1003, 1006, Y2], [1013, 1022, D], [1023, 1032, D], [1037, 1071, Y2]];
  rug.forEach(([a, b, c]) => {
    for (let g = a; g < b; g += 3.4) s += `<rect x="${X(g).toFixed(2)}" y="402" width="${rnd() < .75 ? 1.1 : .6}" height="4.200" fill="${rnd() < .8 ? c : Y1}"/>`;
  });
  s += text(1295, 402.7, '1000G SNPs', { size: 3.4, anchor: 'start', len: 17.5 });
  s += line(X(427), Y(164), X(427), Y(421)) + line(X(427), Y(421), X(1100), Y(421)) + line(X(1100), Y(421), X(1100), Y(427)) + line(X(423), Y(164), X(427), Y(164));
  for (let v = 0; v <= 8; v++) s += line(X(421), 495.3 - v * 9.63, X(427), 495.3 - v * 9.63) + text(X(418), 495.3 - v * 9.63, v, { anchor: 'end' });
  ['155,200,000', '155,400,000', '155,600,000', '155,800,000', '156,000,000'].forEach((t, i) => {
    const x = X(458 + i * 149.5);
    s += line(x, 495.3, x, 497.3) + text(x, 500.3, t, { len: 24 });
  });
  groups.forEach(([c, p]) => p.forEach(([a, b]) => { s += dot(X(a), Y(b), c, 1.7); }));
  [[481, 164], [823, 181], [966, 194]].forEach(([a, b]) => { s += dot(X(a), Y(b), '#4b0f78', 2.1); });
  s += text(X(762), 507.3, 'Chromosome 1', { size: 5.4, len: 37, fill: '#111' });
  s += text(1300, 452, '-log10 P-value', { size: 5.4, len: 36, rot: -90, fill: '#111' });
  $('region').innerHTML = s;
}
```
